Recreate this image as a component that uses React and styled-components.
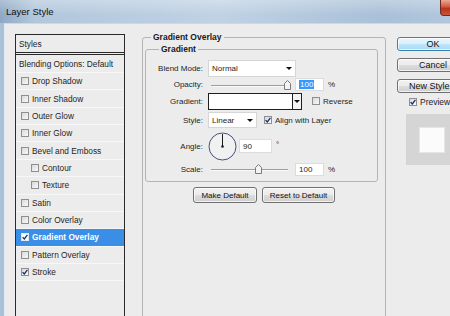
import styled, { createGlobalStyle } from "styled-components";

const GlobalStyle = createGlobalStyle`
  html, body {
    margin: 0;
    padding: 0;
  }
  body {
    width: 450px;
    height: 316px;
    overflow: hidden;
    background: #ececec;
    font-family: "Liberation Sans", Arial, sans-serif;
    color: #1e1e1e;
  }
`;

const Window = styled.div`
  width: 490px;
  height: 316px;
  display: flex;
  flex-direction: column;
  background: #a9c1d9;
`;

const TitleBar = styled.div`
  height: 23px;
  flex-shrink: 0;
  display: flex;
  align-items: flex-start;
  padding-left: 6px;
  background: linear-gradient(to bottom, rgba(255, 255, 255, 0.28), rgba(255, 255, 255, 0) 65%),
    linear-gradient(90deg, #8ea8c4 0%, #b2c7dc 7%, #c0d2e4 45%, #a9c0d8 78%, #b7cbe0 100%);
`;

const Title = styled.span`
  font-size: 9.5px;
  line-height: 24px;
  color: #111;
`;

const CloseButton = styled.div`
  margin-left: auto;
  margin-right: 7px;
  width: 43px;
  height: 16px;
  box-sizing: border-box;
  border: 1px solid #6e2a20;
  border-top: none;
  border-radius: 0 0 4px 4px;
  background: linear-gradient(#e9a896, #cf5a40 45%, #b8321a 55%, #c9543a);
`;

const Body = styled.div`
  flex: 1;
  display: flex;
  align-items: flex-start;
  margin-left: 4px;
  border-left: 1px solid #e3eaf1;
  border-top: 1px solid #cfd8e2;
  background: #ececec;
  overflow: hidden;
`;

/* left list of effects */

const StyleList = styled.div`
  width: 110px;
  height: 300px;
  flex-shrink: 0;
  margin: 10px 0 0 10px;
  box-sizing: border-box;
  border: 1px solid #2a2a2a;
  background: #ececec;
`;

const ListHeader = styled.div`
  height: 20px;
  box-sizing: border-box;
  border-bottom: 3px double #2a2a2a;
  padding-left: 3px;
  display: flex;
  align-items: center;
  font-size: 8.3px;
`;

const ListRow = styled.div`
  height: ${(p) => p.$h || 17.36}px;
  box-sizing: border-box;
  display: flex;
  align-items: center;
  gap: 3px;
  padding-left: ${(p) => (p.$plain ? 3 : p.$sub ? 15 : 5)}px;
  border-bottom: 1px solid #f7f7f7;
  font-size: 8.3px;
  font-weight: ${(p) => (p.$active ? 700 : 400)};
  color: ${(p) => (p.$active ? "#fff" : "#1e1e1e")};
  background: ${(p) => (p.$active ? "#3b8ee6" : "transparent")};
`;

const Box = styled.span`
  width: 8px;
  height: 8px;
  flex-shrink: 0;
  box-sizing: border-box;
  border: 1px solid ${(p) => (p.$light ? "#dfe9f5" : "#8e8f8f")};
  background: ${(p) => (p.$light ? "#fff" : "linear-gradient(135deg, #d9d9d9, #f9f9f9)")};
  display: inline-flex;
  align-items: center;
  justify-content: center;
`;

function Check({ on, light }) {
  return (
    <Box $light={light}>
      {on && (
        <svg width="6" height="6" viewBox="0 0 6 6">
          <path d="M0.6 3.1 L2.3 5 L5.4 0.8" fill="none" stroke="#1c2f6e" strokeWidth="1.3" />
        </svg>
      )}
    </Box>
  );
}

/* main group boxes */

const Main = styled.div`
  margin: 8px 0 0 17px;
  width: 244px;
  flex-shrink: 0;
`;

const Group = styled.fieldset`
  margin: 0;
  padding: ${(p) => (p.$inner ? "0 0 5px" : "0")};
  box-sizing: border-box;
  border: 1px solid #b4b4b4;
  border-radius: 3px;
  min-width: 0;
  ${(p) => (p.$inner ? "margin: 2px 0 0 2px; width: 233px;" : "min-height: 300px; width: 244px;")}
`;

const GroupTitle = styled.legend`
  margin-left: ${(p) => (p.$inner ? 13 : 8)}px;
  padding: 0 2px;
  font-size: 8.5px;
  font-weight: 700;
  line-height: 10px;
  color: #1a1a1a;
`;

const FormGrid = styled.div`
  display: grid;
  grid-template-columns: 57px 1fr;
  grid-template-rows: 17px 15px 18px 20px 32px 14px;
  column-gap: 5px;
  align-items: center;
  padding-top: 6px;
`;

const Label = styled.label`
  text-align: right;
  font-size: 8px;
  color: #1e1e1e;
`;

const Control = styled.div`
  display: flex;
  align-items: center;
  font-size: 8px;
`;

const Select = styled.div`
  width: ${(p) => p.$w}px;
  height: ${(p) => p.$h}px;
  box-sizing: border-box;
  border: 1px solid #d6d6d6;
  background: #fff;
  display: flex;
  align-items: center;
  justify-content: space-between;
  padding: 0 3px 0 3px;
  font-size: 8px;
`;

const Arrow = styled.span`
  width: 0;
  height: 0;
  border-left: 3px solid transparent;
  border-right: 3px solid transparent;
  border-top: 3px solid #111;
`;

const Slider = styled.div`
  position: relative;
  width: 84px;
  height: 12px;
`;

const Track = styled.div`
  margin: 6px 4px 0 3px;
  height: 1px;
  background: #9d9d9d;
  border-bottom: 1px solid #fafafa;
`;

const Thumb = styled.svg`
  position: absolute;
  top: 1px;
`;

const NumberField = styled.div`
  width: ${(p) => p.$w || 29}px;
  height: ${(p) => p.$h || 13}px;
  box-sizing: border-box;
  margin-left: ${(p) => p.$ml ?? 3}px;
  border: 1px solid #dcdcdc;
  background: #fff;
  display: flex;
  align-items: center;
  padding-left: 3px;
  font-size: 8px;
`;

const Highlight = styled.span`
  background: #3399ff;
  color: #fff;
  padding: 0 1px;
`;

const Unit = styled.span`
  margin-left: ${(p) => p.$ml || 4}px;
  font-size: 8px;
  align-self: ${(p) => (p.$top ? "flex-start" : "center")};
  margin-top: ${(p) => (p.$top ? 8 : 0)}px;
`;

const Swatch = styled.div`
  width: 94px;
  height: 17px;
  box-sizing: border-box;
  border: 1px solid #1f1f1f;
  background: #fff;
  display: flex;
  justify-content: flex-end;
`;

const SwatchButton = styled.div`
  width: 8px;
  border-left: 1px solid #1f1f1f;
  background: #f4f4f4;
  display: flex;
  align-items: center;
  justify-content: center;
`;

const Option = styled.span`
  display: flex;
  align-items: center;
  gap: 3px;
  margin-left: ${(p) => p.$ml}px;
  font-size: 8px;
`;

const ButtonRow = styled.div`
  display: flex;
  justify-content: center;
  gap: 5px;
  margin-top: 5px;
`;

const Button = styled.button`
  width: ${(p) => p.$w}px;
  height: ${(p) => p.$h || 16}px;
  padding: 0;
  box-sizing: border-box;
  border: 1px solid ${(p) => (p.$primary ? "#3c7fb1" : "#707070")};
  border-radius: 3px;
  background: ${(p) =>
    p.$primary
      ? "linear-gradient(#eaf6fd 0%, #d9f0fc 50%, #bee6fd 51%, #a7d9f5 100%)"
      : "linear-gradient(#f2f2f2 0%, #ebebeb 50%, #dddddd 51%, #cfcfcf 100%)"};
  box-shadow: inset 0 0 0 1px rgba(255, 255, 255, 0.7);
  font-family: "Liberation Sans", Arial, sans-serif;
  font-size: ${(p) => p.$fs || 8}px;
  color: #111;
  white-space: nowrap;
  overflow: hidden;
`;

/* right column */

const Side = styled.div`
  margin: 13px 0 0 11px;
  width: 72px;
  display: flex;
  flex-direction: column;
  gap: 7px;
  flex-shrink: 0;
`;

const PreviewRow = styled.div`
  display: flex;
  align-items: center;
  gap: 3px;
  padding-left: 12px;
  margin-top: -3px;
  font-size: 8.5px;
`;

const PreviewBox = styled.div`
  margin-left: 9px;
  width: 60px;
  height: 51px;
  box-sizing: border-box;
  padding: 13px;
  background: #d5d5d5;
`;

const PreviewSquare = styled.div`
  width: 26px;
  height: 26px;
  box-sizing: border-box;
  background: #fbfbfb;
  border: 1px solid #e6e6e6;
`;

const effects = [
  { name: "Drop Shadow" },
  { name: "Inner Shadow" },
  { name: "Outer Glow" },
  { name: "Inner Glow" },
  { name: "Bevel and Emboss" },
  { name: "Contour", sub: true },
  { name: "Texture", sub: true },
  { name: "Satin" },
  { name: "Color Overlay" },
  { name: "Gradient Overlay", on: true, active: true },
  { name: "Pattern Overlay" },
  { name: "Stroke", on: true },
];

function SliderField({ at }) {
  return (
    <Slider>
      <Track />
      <Thumb width="7" height="10" viewBox="0 0 7 10" style={{ left: at }}>
        <polygon points="0.5,3.5 3.5,0.5 6.5,3.5 6.5,9.5 0.5,9.5" fill="#f3f3f3" stroke="#7b7b7b" />
      </Thumb>
    </Slider>
  );
}

function Dial() {
  return (
    <svg width="29" height="29" viewBox="0 0 29 29">
      <circle cx="14.5" cy="14.5" r="13.5" fill="#f1f1f1" stroke="#44507a" strokeWidth="1" />
      <line x1="14.5" y1="14.5" x2="14.5" y2="2" stroke="#1a1a1a" strokeWidth="1" />
      <circle cx="14.5" cy="14.5" r="1.3" fill="#1a1a1a" />
    </svg>
  );
}

export default function App() {
  return (
    <>
      <GlobalStyle />
      <Window>
        <TitleBar>
          <Title>Layer Style</Title>
          <CloseButton />
        </TitleBar>
        <Body>
          <StyleList>
            <ListHeader>Styles</ListHeader>
            <ListRow $plain $h={18}>Blending Options: Default</ListRow>
            {effects.map((e) => (
              <ListRow key={e.name} $sub={e.sub} $active={e.active}>
                <Check on={e.on} light={e.active} />
                {e.name}
              </ListRow>
            ))}
          </StyleList>

          <Main>
            <Group>
              <GroupTitle>Gradient Overlay</GroupTitle>
              <Group $inner>
                <GroupTitle $inner>Gradient</GroupTitle>
                <FormGrid>
                  <Label>Blend Mode:</Label>
                  <Control>
                    <Select $w={88} $h={17}>
                      Normal
                      <Arrow />
                    </Select>
                  </Control>

                  <Label>Opacity:</Label>
                  <Control>
                    <SliderField at={76} />
                    <NumberField>
                      <Highlight>100</Highlight>
                    </NumberField>
                    <Unit>%</Unit>
                  </Control>

                  <Label>Gradient:</Label>
                  <Control>
                    <Swatch>
                      <SwatchButton>
                        <Arrow />
                      </SwatchButton>
                    </Swatch>
                    <Option $ml={10}>
                      <Check />
                      Reverse
                    </Option>
                  </Control>

                  <Label>Style:</Label>
                  <Control>
                    <Select $w={49} $h={16}>
                      Linear
                      <Arrow />
                    </Select>
                    <Option $ml={7}>
                      <Check on />
                      Align with Layer
                    </Option>
                  </Control>

                  <Label>Angle:</Label>
                  <Control>
                    <Dial />
                    <NumberField $w={33} $h={14} $ml={2}>
                      90
                    </NumberField>
                    <Unit $top>°</Unit>
                  </Control>

                  <Label>Scale:</Label>
                  <Control>
                    <SliderField at={47} />
                    <NumberField>100</NumberField>
                    <Unit>%</Unit>
                  </Control>
                </FormGrid>
              </Group>
              <ButtonRow>
                <Button $w={64}>Make Default</Button>
                <Button $w={73}>Reset to Default</Button>
              </ButtonRow>
            </Group>
          </Main>

          <Side>
            <Button $primary $w={72} $h={14} $fs={9}>
              OK
            </Button>
            <Button $w={72} $h={14} $fs={9}>
              Cancel
            </Button>
            <Button $w={72} $h={14} $fs={9}>
              New Style...
            </Button>
            <PreviewRow>
              <Check on />
              Preview
            </PreviewRow>
            <PreviewBox>
              <PreviewSquare />
            </PreviewBox>
          </Side>
        </Body>
      </Window>
    </>
  );
}
